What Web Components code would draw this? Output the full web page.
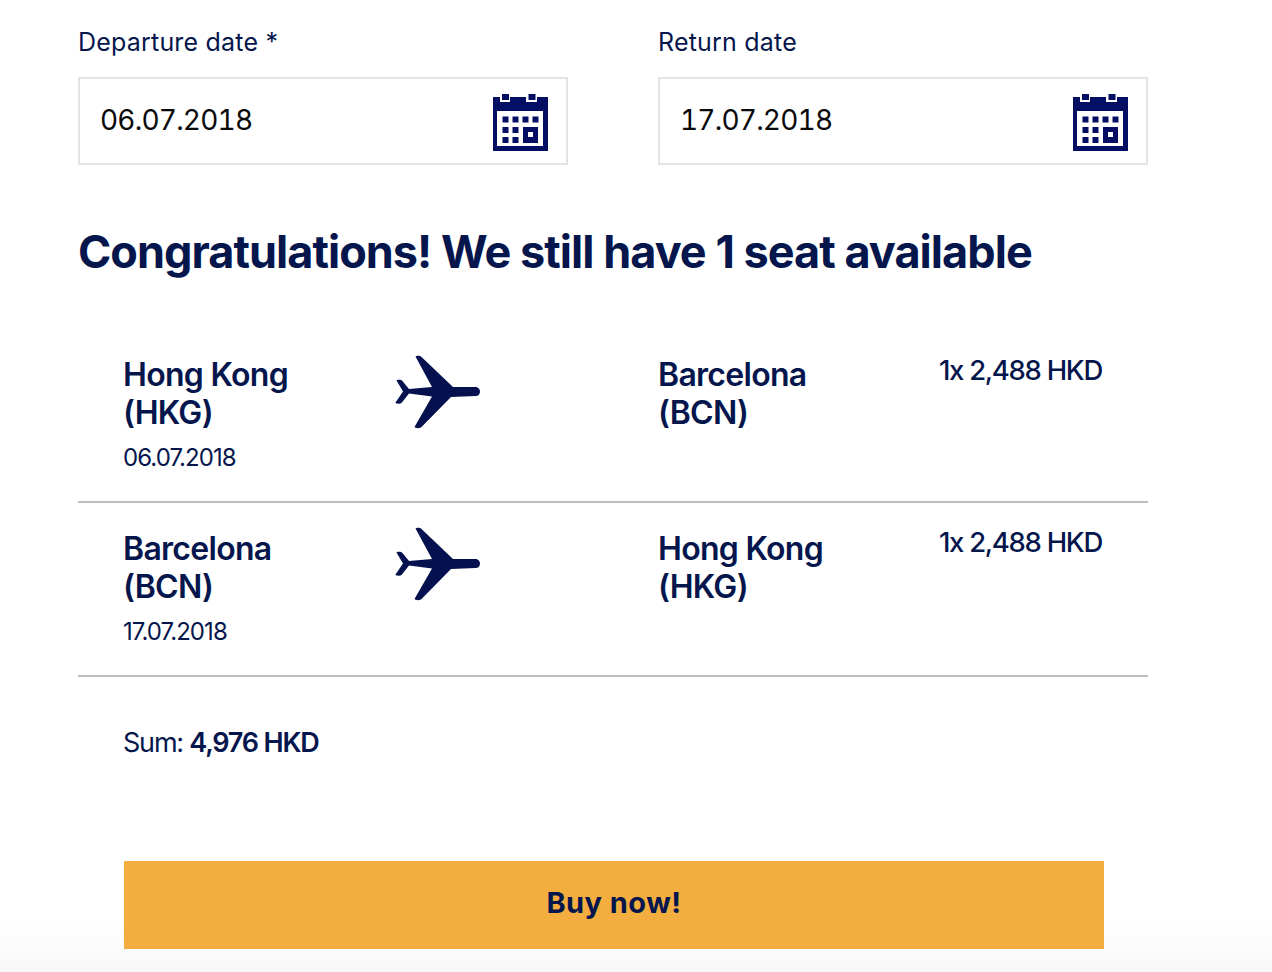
<!DOCTYPE html>
<html>
<head>
<meta charset="utf-8">
<title>Booking</title>
<style>
  html, body { margin: 0; height: 972px; overflow: hidden; }
  body {
    background: linear-gradient(to bottom, #fff 0, #fff 922px, #f8f8f8 972px);
    font-family: Inter, "Liberation Sans", sans-serif;
    color: #05164d;
  }
</style>
</head>
<body>
<booking-page>
  <date-field slot="dates" label="Departure date *" value="06.07.2018"></date-field>
  <date-field slot="dates" label="Return date" value="17.07.2018"></date-field>
  <trip-row from="Hong Kong" from-code="(HKG)" date="06.07.2018" to="Barcelona" to-code="(BCN)" price="1x 2,488 HKD"></trip-row>
  <trip-row class="back" from="Barcelona" from-code="(BCN)" date="17.07.2018" to="Hong Kong" to-code="(HKG)" price="1x 2,488 HKD"></trip-row>
</booking-page>

<script>
class BookingPage extends HTMLElement {
  constructor() {
    super();
    let shadowRoot = this.attachShadow({mode: 'open'});
    shadowRoot.innerHTML = `
    <style>
      :host { display: block; width: 1070px; padding: 25px 0 0 78px; }
      .dates { display: grid; grid-template-columns: 490px 490px; column-gap: 90px; }
      h1 {
        margin: 59px 0 0 0;
        font-size: 45px;
        line-height: 56px;
        font-weight: 700;
        letter-spacing: -0.96px;
        white-space: nowrap;
      }
      .rows { margin-top: 49px; }
      .sum {
        margin: 48px 0 0 45px;
        font-size: 27px;
        line-height: 36px;
        letter-spacing: -1.2px;
      }
      .sum b { font-weight: 600; }
      .buy { margin: 100px 0 0 46px; }
    </style>
    <div class="dates"><slot name="dates"></slot></div>
    <h1>Congratulations! We still have 1 seat available</h1>
    <div class="rows"><slot></slot></div>
    <div class="sum">Sum: <b>4,976 HKD</b></div>
    <div class="buy"><buy-button>Buy now!</buy-button></div>
    `;
  }
}

class DateField extends HTMLElement {
  constructor() {
    super();
    let shadowRoot = this.attachShadow({mode: 'open'});
    shadowRoot.innerHTML = `
    <style>
      :host { display: block; }
      label {
        display: block;
        font-size: 25px;
        line-height: 34px;
        color: #05164d;
        letter-spacing: 0.2px;
      }
      .box {
        box-sizing: border-box;
        height: 88px;
        margin-top: 18px;
        border: 2px solid #e4e4e4;
        display: flex;
        align-items: center;
        justify-content: space-between;
        padding: 0 18px 0 20px;
        font-size: 28px;
        color: #0a0a0a;
        letter-spacing: -0.8px;
        font-variant-numeric: tabular-nums;
      }
      .val { margin-top: -3px; }
      svg { display: block; margin-top: 3px; }
    </style>
    <label>${this.getAttribute('label')}</label>
    <div class="box">
      <span class="val">${this.getAttribute('value')}</span>
      <svg width="55" height="57" viewBox="0 0 55 57">
        <path fill="#040f63" fill-rule="evenodd" d="M0 3H7V8H17V3H33V8H44V3H55V57H0z M4 17V52H50V17z"/>
        <g fill="#040f63">
          <rect x="9" y="0" width="7" height="6"/><rect x="35.500" y="0" width="7" height="6"/>
          <rect x="9.500" y="22.500" width="6" height="6"/><rect x="19.500" y="22.500" width="6" height="6"/><rect x="29.500" y="22.500" width="6" height="6"/><rect x="39.500" y="22.500" width="6" height="6"/>
          <rect x="9.500" y="33" width="6" height="6"/><rect x="19.500" y="33" width="6" height="6"/>
          <rect x="9.500" y="43" width="6" height="6"/><rect x="19.500" y="43" width="6" height="6"/>
          <path fill-rule="evenodd" d="M30 33H45V49H30z M35 38V43H40V38z"/>
        </g>
      </svg>
    </div>
    `;
  }
}

class TripRow extends HTMLElement {
  constructor() {
    super();
    let shadowRoot = this.attachShadow({mode: 'open'});
    shadowRoot.innerHTML = `
    <style>
      :host {
        display: grid;
        grid-template-columns: 272px 263px 281px 1fr;
        box-sizing: border-box;
        height: 174px;
        padding: 27px 45px 0 45px;
        border-bottom: 2px solid #bdbdbd;
      }
      .place {
        font-size: 32px;
        line-height: 38px;
        font-weight: 600;
        letter-spacing: -0.7px;
        white-space: nowrap;
      }
      .date {
        margin-top: 9px;
        font-size: 24px;
        line-height: 34px;
        letter-spacing: -0.94px;
      }
      .price {
        margin-top: -5px;
        font-size: 27.5px;
        font-weight: 500;
        line-height: 38px;
        letter-spacing: -1.3px;
        white-space: nowrap;
      }
      svg { display: block; margin-top: -1px; }
      :host(.back) .price { margin-top: -7px; }
      :host(.back) svg { margin-top: -3px; }
    </style>
    <div>
      <div class="place">${this.getAttribute('from')}<br>${this.getAttribute('from-code')}</div>
      <div class="date">${this.getAttribute('date')}</div>
    </div>
    <div>
      <svg width="86" height="74" viewBox="0 0 86 74">
        <path fill="#05114f" d="M20.500 1.500 C21.500 .5 25 .5 26 1.500 L58 32 H80.500 C83.500 32 85 34.500 85 36.500 C85 39 83.500 41 80.500 41 L56 42 L26.500 72 C25.500 73.500 20.500 73.500 19.500 72 L37 41.500 L14 38.500 L6.500 48 C5.500 49 .5 49 .5 47.500 L8 36.500 L1.500 25.500 C1.500 24.500 6.500 24.500 7 25.500 L14 34 L37 32 Z"/>
      </svg>
    </div>
    <div class="place">${this.getAttribute('to')}<br>${this.getAttribute('to-code')}</div>
    <div class="price">${this.getAttribute('price')}</div>
    `;
  }
}

class BuyButton extends HTMLElement {
  constructor() {
    super();
    let shadowRoot = this.attachShadow({mode: 'open'});
    shadowRoot.innerHTML = `
    <style>
      :host {
        display: flex;
        align-items: center;
        justify-content: center;
        box-sizing: border-box;
        width: 980px;
        height: 88px;
        padding-bottom: 5px;
        background: #f4ae40;
        color: #05164d;
        font-size: 29px;
        font-weight: 700;
        letter-spacing: 0.45px;
      }
    </style>
    <slot></slot>
    `;
  }
}

customElements.define('booking-page', BookingPage);
customElements.define('date-field', DateField);
customElements.define('trip-row', TripRow);
customElements.define('buy-button', BuyButton);
</script>
</body>
</html>
